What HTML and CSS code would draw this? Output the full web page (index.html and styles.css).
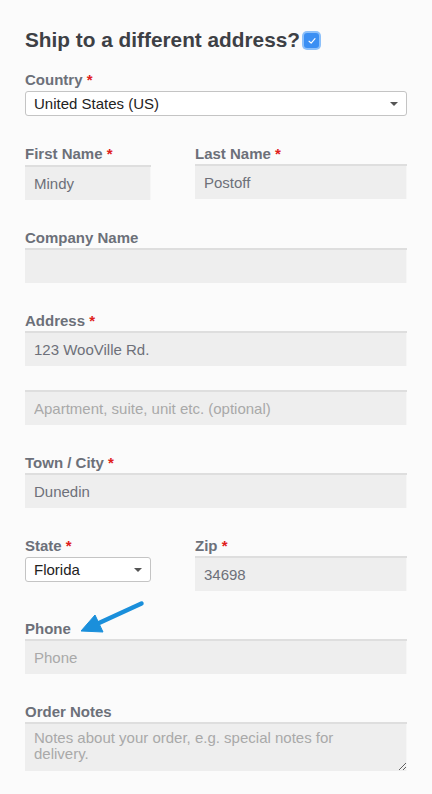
FILE: index.html
```html
<!DOCTYPE html>
<html>
<head>
<meta charset="utf-8">
<link rel="stylesheet" href="styles.css">
</head>
<body>
<div class="form">
  <h3 class="title">Ship to a different address?<span class="checkbox"><svg viewBox="0 0 12 12" width="10" height="10"><path d="M2.5 6.3 L5 8.6 L9.6 3.2" fill="none" stroke="#fff" stroke-width="1.4" stroke-linecap="round" stroke-linejoin="round"/></svg></span></h3>

  <div class="field f-country">
    <label class="lbl">Country <abbr class="req">*</abbr></label>
    <div class="select"><span>United States (US)</span><i class="caret"></i></div>
  </div>

  <div class="row">
    <div class="field narrow">
      <label class="lbl">First Name <abbr class="req">*</abbr></label>
      <input class="inp" type="text" value="Mindy">
    </div>
    <div class="field wide">
      <label class="lbl">Last Name <abbr class="req">*</abbr></label>
      <input class="inp" type="text" value="Postoff">
    </div>
  </div>

  <div class="field">
    <label class="lbl">Company Name</label>
    <input class="inp" type="text" value="">
  </div>

  <div class="field">
    <label class="lbl">Address <abbr class="req">*</abbr></label>
    <input class="inp" type="text" value="123 WooVille Rd.">
    <input class="inp inp-apt" type="text" placeholder="Apartment, suite, unit etc. (optional)">
  </div>

  <div class="field">
    <label class="lbl">Town / City <abbr class="req">*</abbr></label>
    <input class="inp" type="text" value="Dunedin">
  </div>

  <div class="row">
    <div class="field narrow">
      <label class="lbl">State <abbr class="req">*</abbr></label>
      <div class="select"><span>Florida</span><i class="caret"></i></div>
    </div>
    <div class="field wide">
      <label class="lbl">Zip <abbr class="req">*</abbr></label>
      <input class="inp" type="text" value="34698">
    </div>
  </div>

  <div class="field phone">
    <label class="lbl">Phone</label>
    <svg class="arrow" width="70" height="44" viewBox="0 0 70 44">
      <path d="M60.5 9.5 L18 29" stroke="#1a8fdb" stroke-width="4.5" stroke-linecap="round" fill="none"/>
      <path d="M0 37 L14 21 L22 38 Z" fill="#1a8fdb" stroke="#1a8fdb" stroke-width="1" stroke-linejoin="round"/>
    </svg>
    <input class="inp" type="text" placeholder="Phone">
  </div>

  <div class="field">
    <label class="lbl">Order Notes</label>
    <textarea class="inp notes" placeholder="Notes about your order, e.g. special notes for delivery."></textarea>
  </div>
</div>
</body>
</html>
```

FILE: styles.css
```css
* { box-sizing: border-box; }
html, body { margin: 0; padding: 0; }
body {
  background: #fbfbfb;
  font-family: "Liberation Sans", Arial, Helvetica, sans-serif;
  width: 432px;
  height: 794px;
  overflow: hidden;
}
.form {
  padding: 26px 25px 0 25px;
  display: flex;
  flex-direction: column;
}
.title {
  margin: 0;
  font-size: 20.8px;
  line-height: 28px;
  font-weight: bold;
  color: #3d4045;
  display: flex;
  align-items: center;
}
.checkbox {
  display: inline-flex;
  align-items: center;
  justify-content: center;
  width: 15px;
  height: 15px;
  margin-left: 4px;
  margin-top: 1px;
  border-radius: 3px;
  background: #3b8ff3;
  box-shadow: 0 0 0 2px #8cc0fa;
}
.field {
  display: flex;
  flex-direction: column;
  margin-bottom: 28px;
  position: relative;
}
.f-country { margin-top: 16px; }
.lbl {
  font-size: 15px;
  line-height: 18px;
  font-weight: bold;
  color: #6c7079;
  padding-top: 1px;
  margin-bottom: 1px;
}
.f-country .lbl, .narrow .lbl { margin-bottom: 2px; }
.req {
  color: #e0201b;
  text-decoration: none;
  border: 0;
}
.select {
  height: 25px;
  border: 1px solid #c4c4c4;
  border-radius: 3px;
  background: #fff;
  display: flex;
  align-items: center;
  justify-content: space-between;
  padding: 0 8px 0 8px;
  font-size: 15px;
  color: #222;
}
.caret {
  width: 0;
  height: 0;
  border-left: 4px solid transparent;
  border-right: 4px solid transparent;
  border-top: 4px solid #555;
  margin-top: 1px;
}
.row {
  display: flex;
  gap: 44px;
}
.narrow { width: 126px; flex: none; }
.wide { flex: 1; }
.inp {
  display: block;
  width: 100%;
  height: 35px;
  border: 0;
  border-radius: 0;
  margin: 0;
  background: #eeeeee;
  box-shadow: inset 0 2px 0 #dedede, inset -1px 0 0 #f6f6f6;
  padding: 2px 9px 0 9px;
  font-family: "Liberation Sans", Arial, Helvetica, sans-serif;
  font-size: 15px;
  color: #6d7079;
  outline: none;
}
.inp::placeholder { color: #a9a9a9; opacity: 1; }
.inp-apt { margin-top: 24px; }
.phone .arrow {
  position: absolute;
  left: 56px;
  top: -25px;
}
.notes {
  height: 49px;
  resize: both;
  padding: 8px 44px 0 9px;
  line-height: 16px;
  overflow: hidden;
}
```
